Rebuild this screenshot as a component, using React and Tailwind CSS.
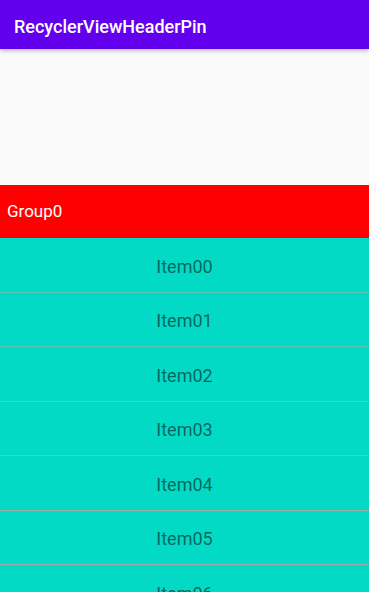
const items = ['Item00', 'Item01', 'Item02', 'Item03', 'Item04', 'Item05', 'Item06', 'Item07'];

const App = () => {
  return (
    <div className="w-[369px] h-[592px] overflow-hidden bg-[#fafafa] font-['Roboto',sans-serif]">
      {/* Toolbar */}
      <div className="relative z-10 h-[49px] bg-[#6200ee] flex items-center px-[14px] pt-[4px] shadow-[0_2px_4px_rgba(0,0,0,0.25)]">
        <span className="text-white text-[18px] font-medium">RecyclerViewHeaderPin</span>
      </div>

      {/* Empty header area */}
      <div className="h-[136px]" />

      {/* Group header */}
      <div className="h-[53px] bg-[#ff0000] flex items-center px-[7px]">
        <span className="text-white text-[17px]">Group0</span>
      </div>

      {/* Items */}
      <div className="flex flex-col">
        {items.map((name, i) => (
          <div
            key={name}
            className={`bg-[#03dac5] flex items-center justify-center border-b ${
              i % 2 === 0 ? 'h-[55px]' : 'h-[54px]'
            } ${i < 2 ? 'border-[#62c4b8]' : 'border-[#a2aaa8]'}`}
          >
            <span className="text-[18px] text-black/55 pt-[2px]">{name}</span>
          </div>
        ))}
      </div>
    </div>
  );
};

export default App;
